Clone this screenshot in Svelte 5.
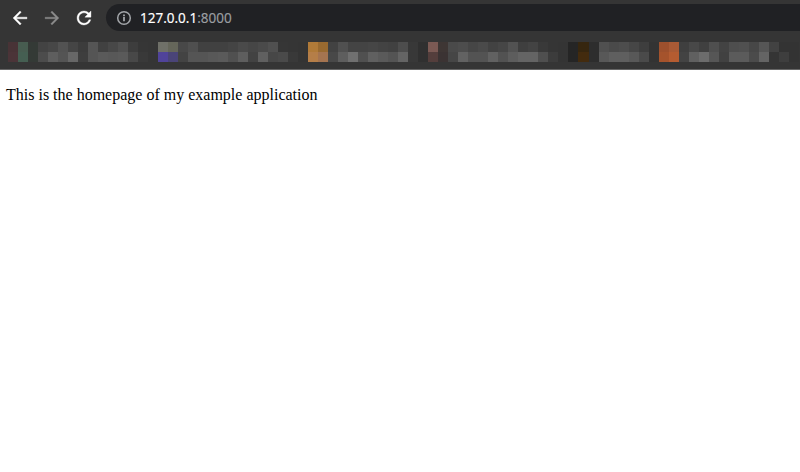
<script>
  const top =
    '483336 475c50 343a36 434343 474747 525252 454545 3c3c3c 555555 414141 484848 505050 3d3d3d 363636 353535 6f7068 65665a 484848 4f4f4f 414141 414141 414141 444444 4a4a4a 464646 4a4a4a 505050 363636 353535 343434 b07a38 996a30 424242 505050 444444 444444 464646 434343 414141 4d4d4d 383838 303030 7b5a54 3e3634 4a4a4a 4d4d4d 464646 4a4a4a 424242 464646 525252 3f3f3f 434343 393939 353535 343434 252525 36260f 2d2d2d 505050 4a4a4a 4d4d4d 464646 3e3e3e 333333 9d502d a95a35 3f3f3f 484848 404040 4f4f4f 434343 4e4e4e 505050 474747 565656 424242 333333 333333'.split(' ');
  const bottom =
    '4b3438 455f52 343a36 4c4c4c 5e5e5e 545454 676767 3e3e3e 555555 5a5a5a 585858 5a5a5a 484848 393939 353535 50439a 4a4478 434343 555555 555555 585858 5a5a5a 505050 5e5e5e 424242 606060 474747 4a4a4a 393939 343434 b57e48 a57450 484848 5e5e5e 707070 505050 606060 5a5a5a 545454 646464 383838 303030 543e3c 3b3333 464646 626262 535353 535353 616161 525252 5d5d5d 646464 646464 4f4f4f 3c3c3c 343434 252525 432b0e 2d2d2d 585858 5f5f5f 5f5f5f 585858 4a4a4a 333333 a5532c b55c31 434343 606060 6c6c6c 565656 414141 5b5b5b 5b5b5b 4b4b4b 646464 353535 3e3e3e 333333'.split(' ');
</script>

<div class="browser">
  <header>
    <nav class="toolbar">
      <svg class="icon" viewBox="0.5 0.5 23 23" fill="#fff"><path d="M20 11H7.83l5.59-5.59L12 4l-8 8 8 8 1.41-1.41L7.83 13H20v-2z" stroke="#fff" stroke-width=".4" /></svg>
      <svg class="icon" viewBox="0.5 0.5 23 23" fill="#8b8b8b"><path d="M12 4l-1.41 1.41L16.17 11H4v2h12.17l-5.58 5.59L12 20l8-8z" stroke="#8b8b8b" stroke-width=".3" /></svg>
      <svg class="icon" viewBox="0.5 0.5 23 23" fill="#fff"><path d="M17.65 6.35C16.2 4.9 14.21 4 12 4c-4.42 0-7.99 3.58-7.99 8s3.57 8 7.99 8c3.73 0 6.84-2.55 7.73-6h-2.08c-.82 2.33-3.04 4-5.65 4-3.31 0-6-2.69-6-6s2.69-6 6-6c1.66 0 3.14.69 4.22 1.78L13 11h7V4l-2.35 2.35z" stroke="#fff" stroke-width=".4" /></svg>
      <div class="address">
        <svg class="info" viewBox="0 0 16 16" fill="none" stroke="#a2a5a9"><circle cx="8" cy="8" r="6.3" stroke-width="1.5" /><path d="M8 7.1v4.2M8 4.6v1.6" stroke-width="1.8" /></svg>
        <span class="url">127.0.0.1<span class="port">:8000</span></span>
      </div>
    </nav>
    <div class="bookmarks">
      {#each [top, bottom] as row}
        <div class="row">
          {#each row as color}<i style="background:#{color}"></i>{/each}
        </div>
      {/each}
    </div>
  </header>
  <main><p>This is the homepage of my example application</p></main>
</div>

<style>
  :global(body) { margin: 0; background: #fff; }
  .browser { height: 472px; overflow: hidden; }
  header { box-sizing: border-box; height: 70px; background: #353535; border-bottom: 1px solid #666; }
  .toolbar { display: flex; align-items: center; height: 36px; padding-left: 10px; gap: 12px; }
  .icon { width: 20px; height: 20px; flex: none; }
  .address { box-sizing: border-box; display: flex; align-items: center; align-self: flex-start; flex: 1; height: 27px; margin: 4px -20px 0 0; padding: 1px 0 0 10px; background: #202124; border-radius: 14px; }
  .info { width: 16px; height: 16px; margin-right: 8px; }
  .url { font: 13.5px/20px "Noto Sans", sans-serif; color: #fff; -webkit-text-stroke: .15px currentColor; }
  .port { color: #9a9da1; }
  .bookmarks { padding: 6px 0 0 7.6px; }
  .row { display: flex; height: 10px; }
  .row i { width: 10.02px; flex: none; }
  main { padding: 16px 6px; }
  p { margin: 0; font: 16px/18px "Liberation Serif", serif; color: #000; }
</style>
